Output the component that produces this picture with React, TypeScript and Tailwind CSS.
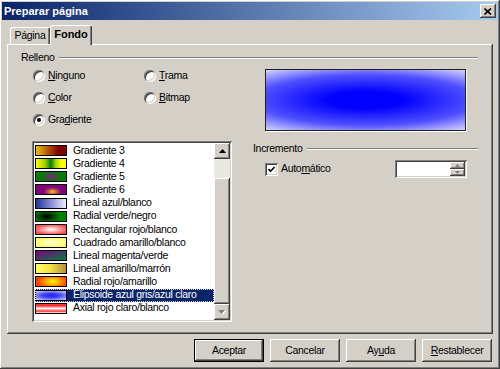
import React from 'react';

const raised =
  'shadow-[inset_-1px_-1px_#404040,inset_1px_1px_#ffffff,inset_-2px_-2px_#808080,inset_2px_2px_#d4d0c8]';
const sunken =
  'shadow-[inset_1px_1px_#808080,inset_-1px_-1px_#ffffff,inset_2px_2px_#404040,inset_-2px_-2px_#d4d0c8]';

const swatches: { label: string; bg: string }[] = [
  { label: 'Gradiente 3', bg: 'bg-[linear-gradient(to_right,#f0c000,#b04800_45%,#800000_75%,#800000)]' },
  { label: 'Gradiente 4', bg: 'bg-[linear-gradient(to_right,#ffff00,#a0d000_30%,#008000_50%,#a0d000_65%,#ffff00_85%)]' },
  { label: 'Gradiente 5', bg: 'bg-[radial-gradient(ellipse_35%_60%_at_50%_50%,#802080,#008000)]' },
  { label: 'Gradiente 6', bg: 'bg-[radial-gradient(ellipse_35%_60%_at_55%_75%,#ffd000,#c06040_40%,#800080_85%)]' },
  { label: 'Lineal azul/blanco', bg: 'bg-[linear-gradient(to_right,#2030a0,#eeeeff)]' },
  { label: 'Radial verde/negro', bg: 'bg-[radial-gradient(ellipse_50%_80%_at_35%_50%,#000000,#008000_90%)]' },
  { label: 'Rectangular rojo/blanco', bg: 'bg-[radial-gradient(ellipse_60%_60%_at_50%_50%,#ffffff,#ff4040)]' },
  { label: 'Cuadrado amarillo/blanco', bg: 'bg-[radial-gradient(ellipse_70%_70%_at_50%_50%,#ffffe0,#ffff40)]' },
  { label: 'Lineal magenta/verde', bg: 'bg-[linear-gradient(to_bottom_right,#800080,#008040)]' },
  { label: 'Lineal amarillo/marrón', bg: 'bg-[linear-gradient(to_right,#ffff60,#f0e040_50%,#b09040)]' },
  { label: 'Radial rojo/amarillo', bg: 'bg-[radial-gradient(ellipse_50%_80%_at_55%_50%,#ffff00,#ff4000)]' },
  { label: 'Elipsoide azul gris/azul claro', bg: 'bg-[radial-gradient(ellipse_70%_60%_at_50%_50%,#2020ff,#4040ff_40%,#c0c0ff)]' },
  { label: 'Axial rojo claro/blanco', bg: 'bg-[linear-gradient(to_bottom,#ff3030,#ff3030_20%,#ffffff_50%,#ff3030_80%,#ffffff)]' },
];

function Radio({ checked }: { checked?: boolean }) {
  return (
    <span
      className={`w-[12px] h-[12px] rounded-full bg-white flex items-center justify-center ${sunken}`}
    >
      {checked ? <span className="w-[4px] h-[4px] rounded-full bg-black" /> : null}
    </span>
  );
}

function RadioRow({ checked, children }: { checked?: boolean; children: React.ReactNode }) {
  return (
    <div className="h-[13px] flex items-center">
      <Radio checked={checked} />
      <span className="ml-[3px]">{children}</span>
    </div>
  );
}

function GroupHeader({ label }: { label: string }) {
  return (
    <div className="h-[13px] flex items-center">
      <span>{label}</span>
      <div className="flex-1 ml-[4px] h-[2px] border-t border-t-[#808080] border-b border-b-white" />
    </div>
  );
}

function Button({ children, isDefault }: { children: React.ReactNode; isDefault?: boolean }) {
  return (
    <div
      className={`w-[70px] h-[23px] flex items-center justify-center bg-[#d4d0c8] ${
        isDefault
          ? 'shadow-[inset_0_0_0_1px_#000000,inset_-2px_-2px_#404040,inset_2px_2px_#ffffff,inset_-3px_-3px_#808080]'
          : raised
      }`}
    >
      {children}
    </div>
  );
}

export default function App() {
  return (
    <div
      className={`w-[500px] h-[369px] bg-[#d4d0c8] p-[2px] flex flex-col text-[10.5px] tracking-[-0.3px] text-black font-['Liberation_Sans',Arial,sans-serif] ${raised}`}
    >
      {/* title bar */}
      <div className="h-[18px] flex items-center bg-[linear-gradient(to_right,#0a246a,#a6caf0)] pl-[2px] pr-[2px]">
        <span className="text-white text-[11px] font-bold tracking-normal">Preparar página</span>
        <div className={`ml-auto w-[16px] h-[14px] flex items-center justify-center bg-[#d4d0c8] ${raised}`}>
          <svg width="8" height="7" viewBox="0 0 8 7">
            <path d="M0.5 0.5 L7 6.5 M7 0.5 L0.5 6.5" stroke="#000" strokeWidth="1.7" />
          </svg>
        </div>
      </div>

      {/* tabs */}
      <div className="mt-[5px] h-[19px] flex items-end pl-[8px]">
        <div className="w-[40px] h-[17px] flex items-center justify-center rounded-tl-[2px] shadow-[inset_1px_1px_#ffffff,inset_-1px_0_#404040,inset_-2px_0_#808080]">
          Página
        </div>
        <div className="relative z-10 w-[42px] h-[20px] mb-[-1px] pb-[1px] flex items-center justify-center bg-[#d4d0c8] text-[11px] font-bold tracking-normal rounded-tl-[2px] shadow-[inset_1px_1px_#ffffff,inset_-1px_0_#404040,inset_-2px_0_#808080]">
          Fondo
        </div>
      </div>

      {/* tab panel */}
      <div className={`mx-[5px] h-[290px] pt-[7px] pl-[14px] pr-[15px] ${raised}`}>
        <GroupHeader label="Relleno" />
        <div className="mt-[5px] flex">
          <div className="w-[244px] pl-[12px] grid grid-cols-[111px_auto] gap-y-[9px] content-start">
            <RadioRow>
              <u>N</u>inguno
            </RadioRow>
            <RadioRow>
              <u>T</u>rama
            </RadioRow>
            <RadioRow>
              <u>C</u>olor
            </RadioRow>
            <RadioRow>
              <u>B</u>itmap
            </RadioRow>
            <RadioRow checked>
              Gra<u>d</u>iente
            </RadioRow>
          </div>
          <div className="w-[201px] h-[62px] border border-[#202020] shadow-[1px_1px_#ffffff] bg-[radial-gradient(ellipse_180px_42px_at_50%_50%,#0000ff_0%,#0000ff_20%,#5050ff_60%,#ffffff_100%)]" />
        </div>

        <div className="mt-[10px] flex">
          {/* gradient list */}
          <div className={`ml-[11px] w-[200px] h-[181px] bg-white p-[2px] flex ${sunken}`}>
            <div className="flex-1 pt-[1px] overflow-hidden">
              {swatches.map((s, i) => {
                const selected = i === 11;
                return (
                  <div
                    key={s.label}
                    className={`ml-[1px] h-[13.15px] flex items-center ${
                      selected ? 'bg-[#0a246a] text-white outline outline-1 outline-dotted outline-offset-[-1px] outline-[#d4d0c8]' : ''
                    }`}
                  >
                    <span className={`w-[32px] h-[11px] border border-black ${s.bg}`} />
                    <span className="ml-[6px] whitespace-nowrap">{s.label}</span>
                  </div>
                );
              })}
            </div>
            <div className="w-[16px] flex flex-col bg-[#eae8e3]">
              <div className={`h-[16px] bg-[#d4d0c8] flex items-center justify-center ${raised}`}>
                <svg width="7" height="4" viewBox="0 0 7 4">
                  <path d="M3.5 0 L7 4 L0 4 Z" fill="#000" />
                </svg>
              </div>
              <div className="h-[19px]" />
              <div className={`flex-1 bg-[#d4d0c8] ${raised}`} />
              <div className={`h-[16px] bg-[#d4d0c8] flex items-center justify-center ${raised}`}>
                <svg width="8" height="5" viewBox="0 0 8 5">
                  <path d="M1 1 L8 1 L4.5 5 Z" fill="#ffffff" />
                  <path d="M0 0 L7 0 L3.5 4 Z" fill="#808080" />
                </svg>
              </div>
            </div>
          </div>

          {/* incremento */}
          <div className="ml-[21px] flex-1 mt-[1px]">
            <GroupHeader label="Incremento" />
            <div className="mt-[5px] h-[18px] pl-[12px] flex items-center">
              <span className={`w-[13px] h-[13px] bg-white flex items-center justify-center ${sunken}`}>
                <svg width="7" height="7" viewBox="0 0 7 7">
                  <path d="M0.5 3 L2.5 5.2 L6.5 1" stroke="#000" strokeWidth="1.6" fill="none" />
                </svg>
              </span>
              <span className="ml-[3px]">
                Auto<u>m</u>ático
              </span>
              <div className={`ml-auto mr-[11px] w-[72px] h-[18px] bg-white p-[2px] flex justify-end ${sunken}`}>
                <div className="w-[15px] flex flex-col">
                  <div className={`flex-1 bg-[#d4d0c8] flex items-center justify-center ${raised}`}>
                    <svg width="5" height="3" viewBox="0 0 5 3">
                      <path d="M2.5 0 L5 3 L0 3 Z" fill="#808080" />
                    </svg>
                  </div>
                  <div className={`flex-1 bg-[#d4d0c8] flex items-center justify-center ${raised}`}>
                    <svg width="5" height="3" viewBox="0 0 5 3">
                      <path d="M0 0 L5 0 L2.5 3 Z" fill="#808080" />
                    </svg>
                  </div>
                </div>
              </div>
            </div>
          </div>
        </div>
      </div>

      {/* buttons */}
      <div className="mt-[5px] flex justify-end gap-[6px] pr-[6px]">
        <Button isDefault>Aceptar</Button>
        <Button>Cancelar</Button>
        <Button>
          Ay<u>u</u>da
        </Button>
        <Button>
          <u>R</u>establecer
        </Button>
      </div>
    </div>
  );
}
